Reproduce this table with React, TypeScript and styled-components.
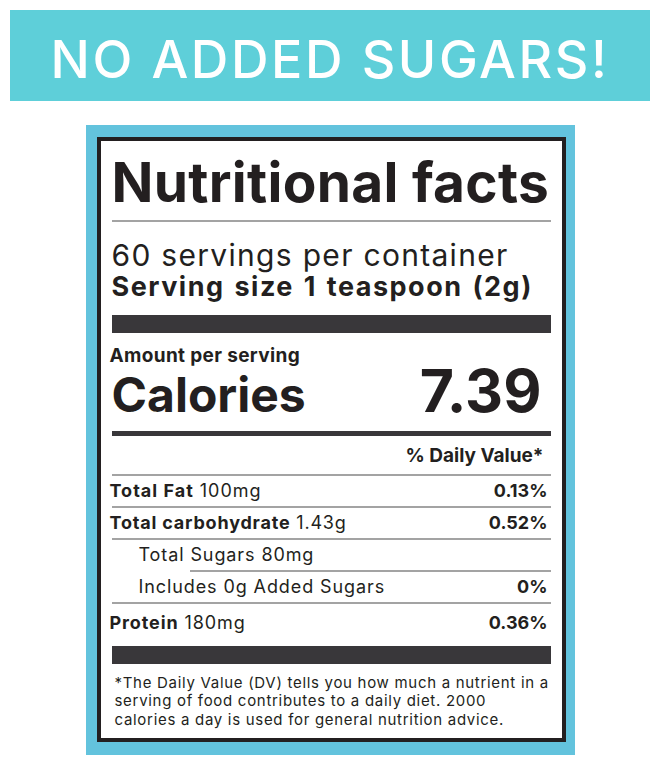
import React from "react";
import styled, { createGlobalStyle } from "styled-components";

const GlobalStyle = createGlobalStyle`
  html, body { margin: 0; padding: 0; background: #ffffff; }
  body { font-family: Inter, "Noto Sans", sans-serif; color: #231f20; }
  * { box-sizing: border-box; }
`;

const Page = styled.div`
  display: flex;
  flex-direction: column;
  align-items: center;
  padding: 10px 10px 0;
  width: 660px;
`;

const Banner = styled.div`
  align-self: stretch;
  height: 91px;
  padding-top: 9px;
  background: #5ecfd9;
  color: #ffffff;
  text-align: center;
  font-size: 52px;
  line-height: 82px;
  font-weight: 500;
  letter-spacing: 2.6px;
  white-space: nowrap;
`;

const LabelFrame = styled.div`
  margin-top: 24px;
  width: 489px;
  background: #63c3dd;
  padding: 12px 9px 13px 11px;
`;

const Panel = styled.div`
  border: 4px solid #231f20;
  background: #ffffff;
  padding: 11px 11px 9px 11px;
  display: flex;
  flex-direction: column;
`;

const Title = styled.div`
  font-size: 55px;
  line-height: 60px;
  font-weight: 700;
  letter-spacing: 0.3px;
  white-space: nowrap;
`;

const Rule = styled.div<{ $h: number; $mt: number; $indent?: number; $tone?: "bar" | "line" }>`
  height: ${(p) => p.$h}px;
  margin-top: ${(p) => p.$mt}px;
  margin-left: ${(p) => p.$indent ?? 0}px;
  background: ${(p) => (p.$tone === "bar" ? "#39373a" : "#a3a3a3")};
`;

const Servings = styled.div`
  margin-top: 16px;
  font-size: 30px;
  line-height: 34px;
  font-weight: 400;
  letter-spacing: 1.3px;
  white-space: nowrap;
`;

const ServingSize = styled.div`
  font-size: 27px;
  line-height: 30px;
  font-weight: 700;
  letter-spacing: 1.5px;
  word-spacing: 2px;
  white-space: nowrap;
`;

const Amount = styled.div`
  margin-top: 13px;
  margin-left: -2px;
  font-size: 19px;
  line-height: 20px;
  font-weight: 700;
  letter-spacing: 0.35px;
`;

const CaloriesRow = styled.div`
  display: flex;
  justify-content: space-between;
  align-items: baseline;
  height: 50px;
  padding-right: 9px;
`;

const CaloriesLabel = styled.span`
  font-size: 48px;
  line-height: 50px;
  font-weight: 700;
`;

const CaloriesValue = styled.span`
  font-size: 59px;
  line-height: 50px;
  font-weight: 700;
`;

const DVHeader = styled.div`
  margin-top: 9px;
  font-size: 19px;
  line-height: 22px;
  font-weight: 700;
  text-align: right;
  padding-right: 7px;
`;

const NutrientRow = styled.div<{ $indent?: number; $pad?: number }>`
  display: flex;
  justify-content: space-between;
  align-items: baseline;
  height: ${(p) => 30 + (p.$pad ?? 0)}px;
  padding-top: ${(p) => p.$pad ?? 0}px;
  padding-left: ${(p) => p.$indent ?? 0}px;
  padding-right: 3px;
  font-size: 18px;
  line-height: 30px;
`;

const Name = styled.span<{ $spacing: number }>`
  white-space: nowrap;
  letter-spacing: ${(p) => p.$spacing}px;
  margin-left: -2px;
`;

const Strong = styled.b`
  font-weight: 700;
`;

const Percent = styled.span`
  font-weight: 700;
`;

const Footnote = styled.p`
  margin: 10px 0 0 3px;
  font-size: 15px;
  line-height: 18.5px;
  font-weight: 400;
  letter-spacing: 0.7px;
  white-space: nowrap;
`;

type Nutrient = {
  bold?: string;
  rest: string;
  pct?: string;
  indent?: number;
  pad?: number;
  ruleIndent?: number;
  spacing: number;
};

const nutrients: Nutrient[] = [
  { bold: "Total Fat", rest: " 100mg", pct: "0.13%", spacing: 1 },
  { bold: "Total carbohydrate", rest: " 1.43g", pct: "0.52%", spacing: 0.8 },
  { rest: "Total Sugars 80mg", indent: 29, spacing: 0.9 },
  { rest: "Includes 0g Added Sugars", pct: "0%", indent: 29, ruleIndent: 78, spacing: 0.9 },
  { bold: "Protein", rest: " 180mg", pct: "0.36%", pad: 4, ruleIndent: 0, spacing: 0.9 },
];

export default function App() {
  return (
    <>
      <GlobalStyle />
      <Page>
        <Banner>NO ADDED SUGARS!</Banner>
        <LabelFrame>
          <Panel>
            <Title>Nutritional facts</Title>
            <Rule $h={1.5} $mt={8} />
            <Servings>60 servings per container</Servings>
            <ServingSize>Serving size 1 teaspoon (2g)</ServingSize>
            <Rule $h={18} $mt={13} $tone="bar" />
            <Amount>Amount per serving</Amount>
            <CaloriesRow>
              <CaloriesLabel>Calories</CaloriesLabel>
              <CaloriesValue>7.39</CaloriesValue>
            </CaloriesRow>
            <Rule $h={5} $mt={15} $tone="bar" />
            <DVHeader>% Daily Value*</DVHeader>
            <Rule $h={2} $mt={7} />
            {nutrients.map((n, i) => (
              <React.Fragment key={i}>
                {i > 0 && <Rule $h={2} $mt={0} $indent={n.ruleIndent ?? 0} />}
                <NutrientRow $indent={n.indent} $pad={n.pad}>
                  <Name $spacing={n.spacing}>
                    {n.bold && <Strong>{n.bold}</Strong>}
                    {n.rest}
                  </Name>
                  {n.pct && <Percent>{n.pct}</Percent>}
                </NutrientRow>
              </React.Fragment>
            ))}
            <Rule $h={18} $mt={8} $tone="bar" />
            <Footnote>
              *The Daily Value (DV) tells you how much a nutrient in a<br />
              serving of food contributes to a daily diet. 2000<br />
              calories a day is used for general nutrition advice.
            </Footnote>
          </Panel>
        </LabelFrame>
      </Page>
    </>
  );
}
